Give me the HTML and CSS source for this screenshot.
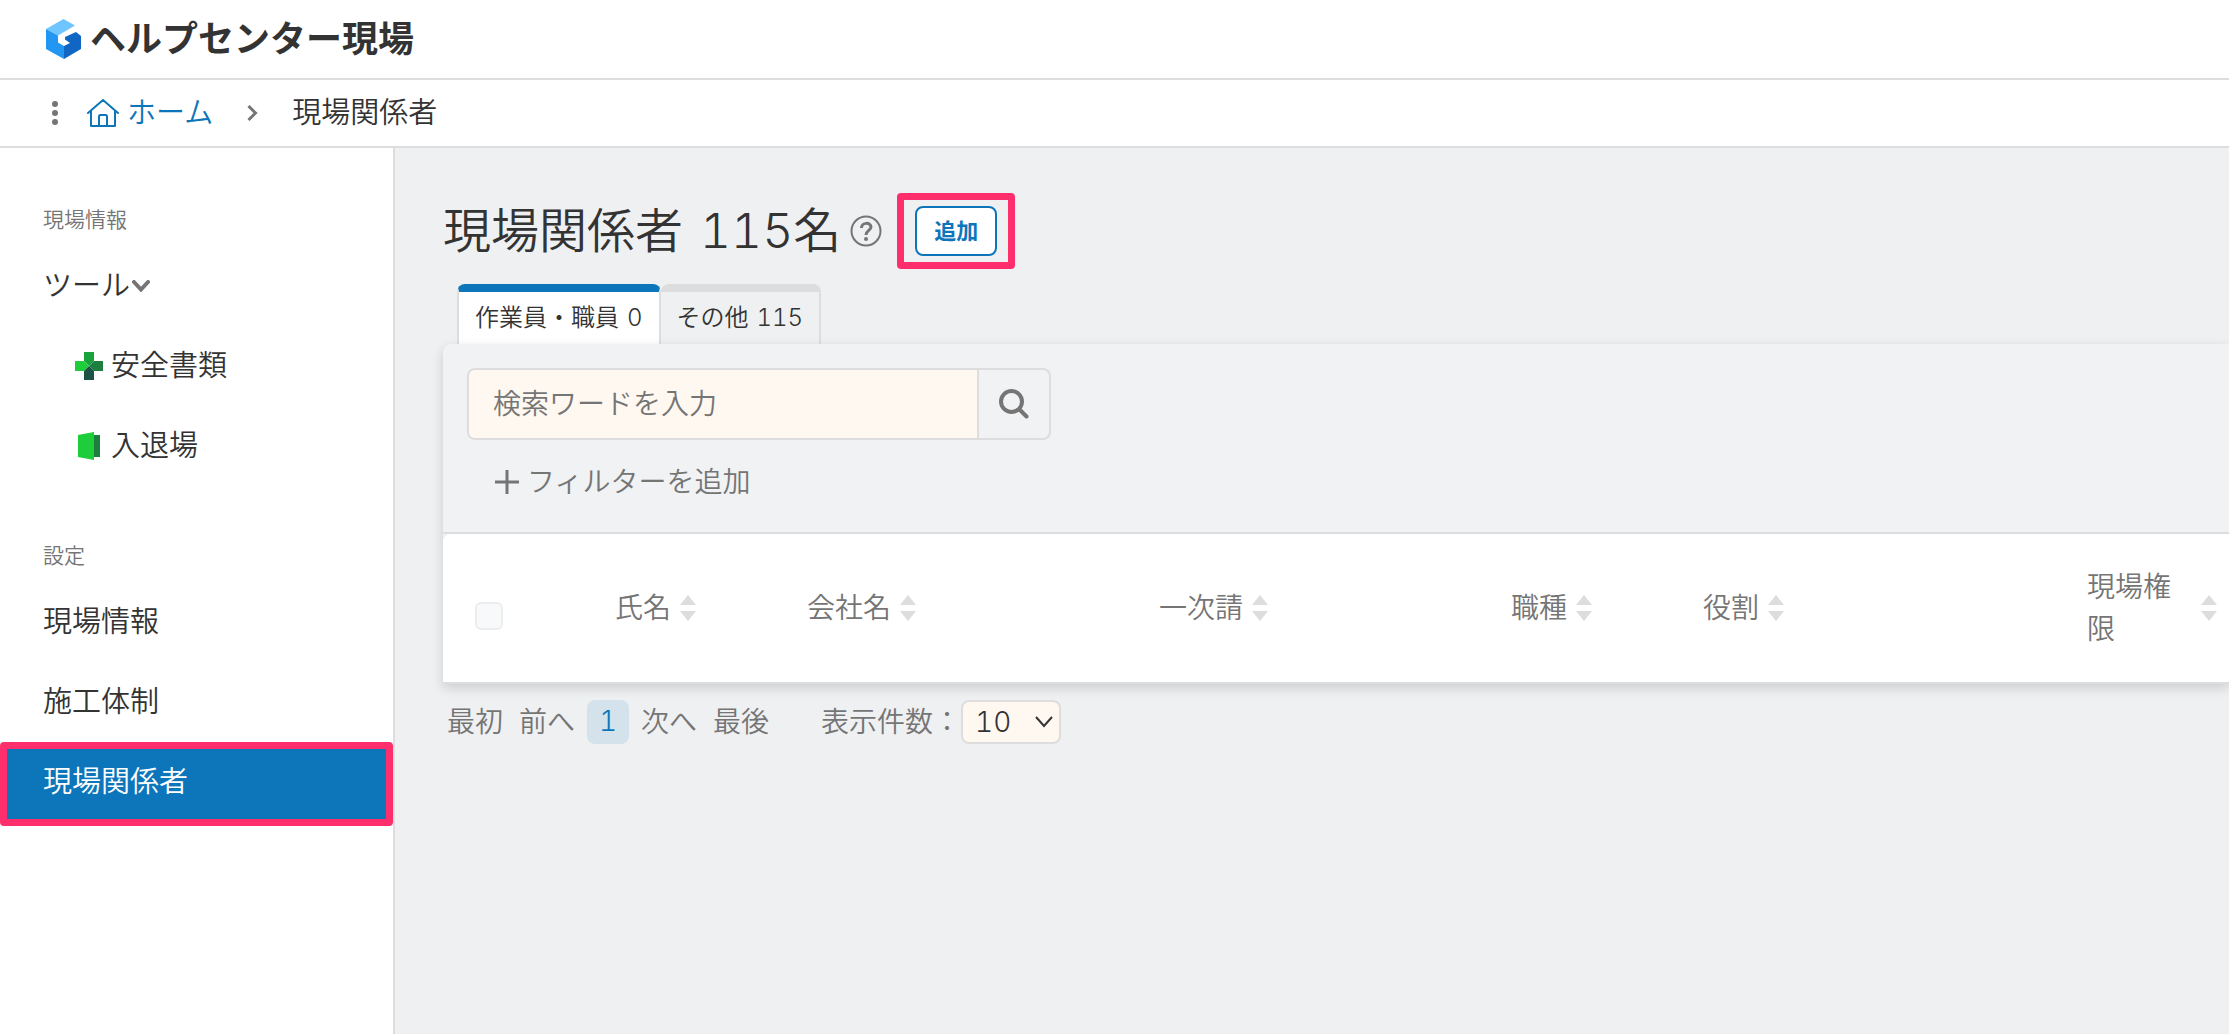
FILE: index.html
```html
<!DOCTYPE html>
<html lang="ja">
<head>
    <meta charset="UTF-8">
    <meta name="viewport" content="width=device-width, initial-scale=1.0">
    <title>現場関係者</title>
    <link rel="stylesheet" href="styles.css">
</head>
<body>
    <header class="header">
        <svg class="logo" viewBox="0 0 36 40" width="36" height="40" aria-hidden="true">
            <path fill="#6fc5ff" d="M0 10 17.500 0 29 6.500 12 16.500z"/>
            <path fill="#2196f3" d="M0 10 12 16.500v7l6 3.500v13L0 30z"/>
            <path fill="#1166c4" d="M18 27l6-3-5-3.500v-2.500L30 13l5 4v13L18 40z"/>
        </svg>
        <h1>ヘルプセンター現場</h1>
    </header>

    <nav class="breadcrumb" aria-label="breadcrumb">
        <button class="icon-button" type="button" aria-label="メニュー">
            <svg viewBox="0 0 6 24" width="6" height="24" fill="#757575">
                <circle cx="3" cy="3" r="3"/><circle cx="3" cy="12" r="3"/><circle cx="3" cy="21" r="3"/>
            </svg>
        </button>
        <a class="home" href="#">
            <svg viewBox="0 0 32 28" width="32" height="28" fill="none" stroke="#0d76ba" stroke-width="2" stroke-linecap="round" stroke-linejoin="round">
                <path d="M1 14 16 1l15 13M4 12v15h24V12M12 27v-9.500q0-1.500 1.500-1.500h5q1.500 0 1.500 1.500V27"/>
            </svg>
            ホーム
        </a>
        <svg class="separator" viewBox="0 0 11 16" width="11" height="16" fill="none" stroke="#757575" stroke-width="3" aria-hidden="true">
            <path d="M1.500 1 8.500 8l-7 7"/>
        </svg>
        <span>現場関係者</span>
    </nav>

    <div class="layout">
        <aside class="sidebar">
            <h2>現場情報</h2>
            <ul>
                <li>
                    <button class="menu-item toggle" type="button">ツール
                        <svg viewBox="0 0 18 12" width="18" height="12" fill="none" stroke="#757575" stroke-width="4" stroke-linecap="round"><path d="M2 2l7 7.500L16 2"/></svg>
                    </button>
                </li>
                <li>
                    <a class="menu-item sub" href="#">
                        <svg viewBox="0 0 28 28" width="28" height="28">
                            <path fill="#1aa33c" d="M9 0h10v9l-5 5-5-5z"/>
                            <path fill="#1dce3a" d="M0 9h9l5 5-5 5H0z"/>
                            <path fill="#1c7f40" d="M28 9h-9l-5 5 5 5h9z"/>
                            <path fill="#1c5344" d="M9 28h10v-9l-5-5-5 5z"/>
                        </svg>
                        安全書類
                    </a>
                </li>
                <li>
                    <a class="menu-item sub" href="#">
                        <svg viewBox="0 0 28 28" width="28" height="28">
                            <path fill="#1c7f40" d="M19 3h6v22h-6z"/>
                            <path fill="#1dce3a" d="M3 3 19 0v28L3 25z"/>
                        </svg>
                        入退場
                    </a>
                </li>
            </ul>
            <h2>設定</h2>
            <ul>
                <li><a class="menu-item" href="#">現場情報</a></li>
                <li><a class="menu-item" href="#">施工体制</a></li>
                <li><a class="menu-item active" href="#" aria-current="page">現場関係者</a></li>
            </ul>
        </aside>

        <main class="main">
            <div class="title">
                <h2>現場関係者<span class="count">115名</span></h2>
                <button class="icon-button" type="button" aria-label="ヘルプ">
                    <svg viewBox="0 0 32 32" width="32" height="32" fill="none" stroke="#757575">
                        <circle cx="16" cy="16" r="14.500" stroke-width="2"/>
                        <path stroke-width="3" d="M11.500 13c0-6 9.500-6 9.500-1 0 3.500-5 3.500-5 8"/>
                        <circle cx="16" cy="24" r="2" fill="#757575" stroke="none"/>
                    </svg>
                </button>
                <div class="highlight">
                    <button class="add" type="button">追加</button>
                </div>
            </div>

            <div class="tabs" role="tablist">
                <button class="tab selected" type="button" role="tab" aria-selected="true">作業員・職員<span class="tab-count">0</span></button>
                <button class="tab" type="button" role="tab" aria-selected="false">その他<span class="tab-count">115</span></button>
            </div>

            <section class="panel">
                <div class="filters">
                    <form class="search">
                        <input type="text" placeholder="検索ワードを入力" aria-label="検索ワードを入力">
                        <button type="button" aria-label="検索">
                            <svg viewBox="0 0 30 30" width="30" height="30" fill="none" stroke="#757575" stroke-width="4" stroke-linecap="round">
                                <circle cx="12.500" cy="12.500" r="10.500"/>
                                <path d="M20.500 20.500 27.500 27.500"/>
                            </svg>
                        </button>
                    </form>
                    <button class="add-filter" type="button">
                        <svg viewBox="0 0 24 24" width="24" height="24" stroke="#757575" stroke-width="3"><path d="M12 0v24M0 12h24"/></svg>
                        フィルターを追加
                    </button>
                </div>
                <table>
                    <colgroup>
                        <col class="col-check">
                        <col class="col-narrow">
                        <col class="col-wide">
                        <col class="col-wide">
                        <col class="col-narrow">
                        <col>
                        <col class="col-auth">
                    </colgroup>
                    <thead>
                        <tr>
                            <th><input type="checkbox" aria-label="すべて選択" disabled></th>
                            <th><div class="sort">氏名<svg viewBox="0 0 16 26" width="16" height="26"><path d="M8 0l8 10H0zM0 16h16L8 26z"/></svg></div></th>
                            <th><div class="sort">会社名<svg viewBox="0 0 16 26" width="16" height="26"><path d="M8 0l8 10H0zM0 16h16L8 26z"/></svg></div></th>
                            <th><div class="sort">一次請<svg viewBox="0 0 16 26" width="16" height="26"><path d="M8 0l8 10H0zM0 16h16L8 26z"/></svg></div></th>
                            <th><div class="sort">職種<svg viewBox="0 0 16 26" width="16" height="26"><path d="M8 0l8 10H0zM0 16h16L8 26z"/></svg></div></th>
                            <th><div class="sort">役割<svg viewBox="0 0 16 26" width="16" height="26"><path d="M8 0l8 10H0zM0 16h16L8 26z"/></svg></div></th>
                            <th><div class="sort">現場権限<svg viewBox="0 0 16 26" width="16" height="26"><path d="M8 0l8 10H0zM0 16h16L8 26z"/></svg></div></th>
                        </tr>
                    </thead>
                </table>
            </section>

            <div class="pager">
                <a href="#">最初</a>
                <a href="#">前へ</a>
                <a class="current" href="#" aria-current="page">1</a>
                <a href="#">次へ</a>
                <a href="#">最後</a>
                <label for="per-page">表示件数：</label>
                <div class="select">
                    <select id="per-page">
                        <option>10</option>
                    </select>
                    <svg viewBox="0 0 18 12" width="18" height="12" fill="none" stroke="#333" stroke-width="2"><path d="M1 1l8 9 8-9"/></svg>
                </div>
            </div>
        </main>
    </div>
</body>
</html>
```
FILE: styles.css
```css
* {
    box-sizing: border-box;
}
body {
    font-family: Inter, "Noto Sans CJK JP", sans-serif;
    font-size: 28px;
    font-weight: 350;
    font-variant-numeric: tabular-nums;
    line-height: 42px;
    color: #333;
    background-color: #fff;
    margin: 0;
    min-height: 100vh;
    display: flex;
    flex-direction: column;
}
h1, h2, ul {
    margin: 0;
    padding: 0;
    list-style: none;
}
svg {
    flex: none;
    display: block;
}
a {
    color: inherit;
    text-decoration: none;
}
button, input, select {
    font: inherit;
    font-variant-numeric: tabular-nums;
    color: inherit;
    margin: 0;
}
button {
    cursor: pointer;
}
.icon-button {
    padding: 0;
    border: none;
    background: none;
}
.header {
    display: flex;
    align-items: center;
    gap: 8px;
    height: 80px;
    padding: 0 46px;
    border-bottom: 2px solid #ddd;
}
.header h1 {
    font-size: 36px;
    font-weight: 700;
}
.breadcrumb {
    display: flex;
    align-items: center;
    height: 68px;
    padding: 0 52px;
    border-bottom: 2px solid #ddd;
    font-size: 29px;
}
.home {
    display: flex;
    align-items: center;
    gap: 8px;
    margin-left: 29px;
    color: #0d76ba;
}
.separator {
    margin: 0 34px;
}
.layout {
    flex: 1;
    display: flex;
}
.sidebar {
    flex: none;
    width: 395px;
    padding-top: 51px;
    border-right: 2px solid #ddd;
    font-size: 29px;
}
.sidebar h2 {
    padding-left: 43px;
    font-size: 21px;
    font-weight: 350;
    color: #757575;
}
.sidebar ul {
    padding: 5px 0 49px;
}
.menu-item {
    display: flex;
    align-items: center;
    gap: 8px;
    width: 100%;
    height: 80px;
    padding: 0 43px;
    border: none;
    background: none;
}
.toggle {
    gap: 2px;
}
.sub {
    padding-left: 75px;
}
.active {
    height: 84px;
    border: 7px solid #ff2e6c;
    border-radius: 4px;
    padding: 0 36px 4px;
    color: #fff;
    background-color: #0d76ba;
}
.main {
    flex: 1;
    min-width: 0;
    padding: 45px 0 0 48px;
    background-color: #eff0f2;
}
.title {
    display: flex;
    align-items: center;
    height: 76px;
}
.title h2 {
    font-size: 48px;
    font-weight: 350;
    margin-right: 9px;
}
.count {
    margin-left: 17px;
}
.highlight {
    margin-left: 15px;
    padding: 6px 11px;
    border: 7px solid #ff2e6c;
    border-radius: 4px;
}
.add {
    display: block;
    width: 82px;
    height: 50px;
    padding: 0;
    border: 2px solid #0d76ba;
    border-radius: 8px;
    background-color: #fff;
    color: #0d76ba;
    font-size: 22px;
    font-weight: 700;
}
.tabs {
    display: flex;
    padding: 15px 14px 0;
}
.tab {
    height: 60px;
    padding: 0 16px;
    border: 2px solid #ddd;
    border-top-width: 8px;
    border-bottom: none;
    border-left: none;
    border-radius: 8px 8px 0 0;
    background-color: #eff0f2;
    font-size: 24px;
}
.tab.selected {
    border-left: 2px solid #ddd;
    border-top-color: #0d76ba;
    background-color: #fff;
}
.tab-count {
    margin-left: 8px;
}
.panel {
    position: relative;
    background-color: #f1f2f4;
    border-radius: 8px 0 0 0;
    box-shadow: 0 4px 12px rgba(0, 0, 0, 0.15);
}
.filters {
    padding: 24px 24px 29px;
    border-bottom: 2px solid #ddd;
}
.search {
    display: flex;
    width: 584px;
    height: 72px;
    border: 2px solid #ddd;
    border-radius: 8px;
    overflow: hidden;
}
.search input {
    flex: 1;
    min-width: 0;
    padding: 0 24px;
    border: none;
    background-color: #fff8f1;
}
.search input::placeholder {
    color: #757575;
    opacity: 1;
}
.search button {
    width: 72px;
    padding: 0 20px;
    border: none;
    border-left: 2px solid #ddd;
    background: none;
}
.add-filter {
    display: flex;
    align-items: center;
    gap: 8px;
    margin-top: 21px;
    padding: 0 28px;
    border: none;
    background: none;
    color: #757575;
}
table {
    width: 100%;
    table-layout: fixed;
    border-collapse: separate;
    border-spacing: 0;
    border-bottom: 2px solid #ddd;
    border-radius: 8px 0 0 0;
    background-color: #fff;
}
.col-check {
    width: 156px;
}
.col-narrow {
    width: 192px;
}
.col-wide {
    width: 352px;
}
.col-auth {
    width: 158px;
}
th {
    height: 148px;
    padding: 0 12px 0 16px;
    font-weight: 350;
    text-align: left;
    color: #757575;
}
th:first-child {
    padding: 16px 0 0 32px;
}
th input {
    display: block;
    appearance: none;
    width: 28px;
    height: 28px;
    border: 2px solid #eceeee;
    border-radius: 6px;
    background-color: #f7f9fb;
}
.sort {
    display: flex;
    align-items: center;
    gap: 9px;
}
.sort svg {
    fill: #ddd;
}
.pager {
    display: flex;
    align-items: center;
    gap: 16px;
    padding: 16px 4px;
    color: #757575;
}
.pager .current {
    width: 42px;
    height: 44px;
    margin: 0 -4px;
    border-radius: 8px;
    background-color: #d3e2eb;
    color: #0d76ba;
    text-align: center;
}
.pager label {
    margin-left: 36px;
}
.select {
    position: relative;
    margin-left: -16px;
}
.select select {
    appearance: none;
    display: block;
    width: 100px;
    height: 44px;
    padding: 0 12px;
    border: 2px solid #ddd;
    border-radius: 8px;
    background-color: #fff8f1;
    color: #333;
    line-height: 40px;
}
.select svg {
    position: absolute;
    top: 16px;
    right: 8px;
    pointer-events: none;
}
```
